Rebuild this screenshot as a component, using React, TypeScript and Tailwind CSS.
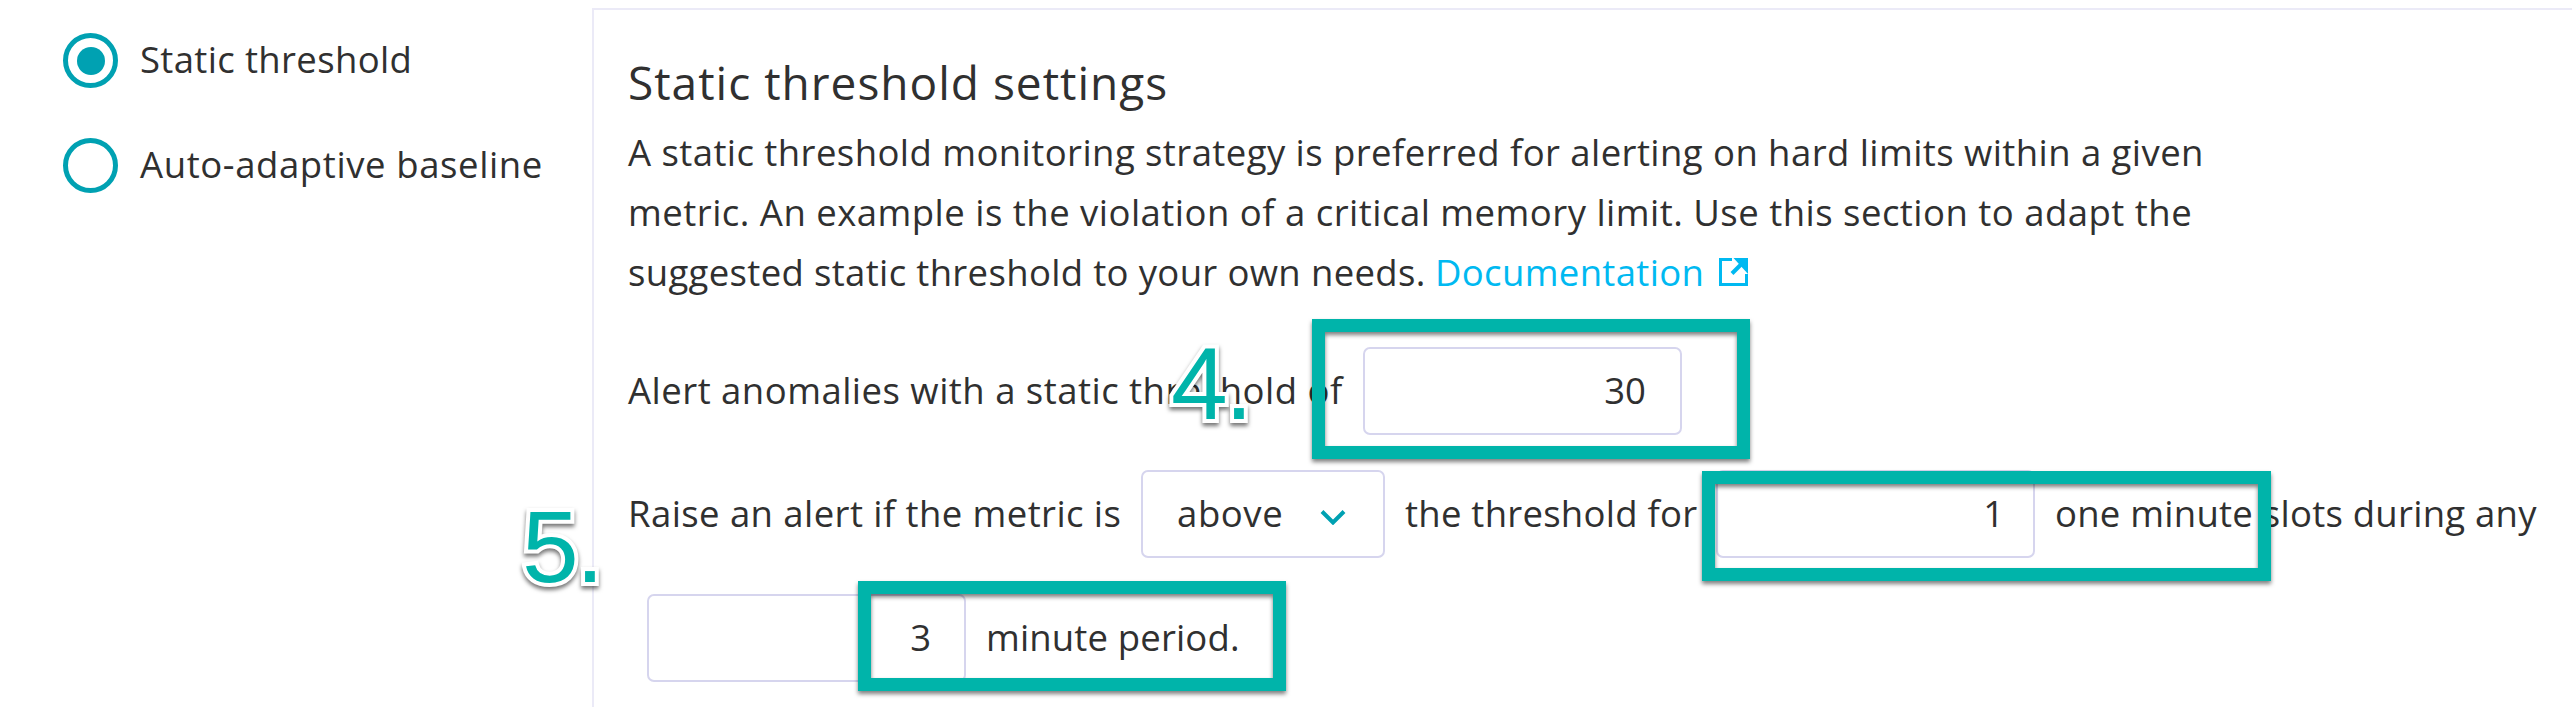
import type { ReactNode } from "react";

function Radio({ label, checked, spacing }: { label: string; checked?: boolean; spacing: string }) {
  return (
    <label className="flex h-[55px] items-center gap-[22px]">
      <span className="flex size-[55px] shrink-0 items-center justify-center rounded-full border-[5px] border-[#00a1b2]">
        {checked && <span className="size-7 rounded-full bg-[#00a1b2]" />}
      </span>
      <span className={`whitespace-nowrap pb-[2px] leading-[49px] ${spacing}`}>{label}</span>
    </label>
  );
}

function Phrase({ children, className }: { children: ReactNode; className: string }) {
  return <span className={`shrink-0 whitespace-nowrap pb-[2px] ${className}`}>{children}</span>;
}

function NumberField({ value, className = "pr-[34px]" }: { value: string; className?: string }) {
  return (
    <span
      className={`flex h-[88px] w-[319px] shrink-0 items-center justify-end rounded-[7px] border-2 border-[#d6d5ee] pb-[2px] ${className}`}
    >
      {value}
    </span>
  );
}

function Highlight({ className }: { className: string }) {
  return (
    <div
      className={`absolute border-[13px] border-[#00b4aa] [filter:drop-shadow(0_3px_2px_rgba(0,0,0,0.5))] ${className}`}
    />
  );
}

function StepNumber({ children, className }: { children: string; className: string }) {
  return (
    <div
      className={`absolute whitespace-nowrap font-['Liberation_Sans',sans-serif] text-[102px] leading-[98px] tracking-[-3px] text-[#00b4aa] [-webkit-text-stroke:8px_white] [paint-order:stroke_fill] [filter:drop-shadow(0_3px_2px_rgba(0,0,0,0.55))] ${className}`}
    >
      {children}
    </div>
  );
}

export default function App() {
  return (
    <div className="relative flex h-[707px] w-[2572px] overflow-hidden bg-white font-['Open_Sans',sans-serif] text-[36.5px] text-[#303030]">
      <div className="flex w-[592px] shrink-0 flex-col gap-[50px] pt-[33px] pl-[63px]">
        <Radio label="Static threshold" checked spacing="tracking-[0.35px]" />
        <Radio label="Auto-adaptive baseline" spacing="tracking-[0.6px]" />
      </div>

      <div className="mt-2 flex w-[1980px] shrink-0 flex-col border-t-2 border-l-2 border-[#ebeaf7] pt-[40px] pl-[34px]">
        <h2 className="text-[46px] leading-[64px] tracking-[1px]">Static threshold settings</h2>
        <div className="mt-2 leading-[60px] whitespace-nowrap">
          <p className="tracking-[0.43px]">
            A static threshold monitoring strategy is preferred for alerting on hard limits within a given
          </p>
          <p className="tracking-[0.48px]">
            metric. An example is the violation of a critical memory limit. Use this section to adapt the
          </p>
          <p className="flex items-center tracking-[0.34px]">
            <span className="w-[807px]">suggested static threshold to your own needs.</span>
            <a className="flex items-center gap-[15px] text-[#00b9f1]">
              Documentation
              <svg width="29" height="28" viewBox="0 0 29 28" fill="none">
                <path d="M13 1.5H1.5V26.5H27.5V16" stroke="currentColor" strokeWidth="3" />
                <path d="M14.5 0H29V16Z" fill="currentColor" />
                <path d="M13 15.5L24 4.5" stroke="currentColor" strokeWidth="4" />
              </svg>
            </a>
          </p>
        </div>

        <div className="mt-[45px] flex items-center">
          <Phrase className="w-[735px] tracking-[0.48px]">Alert anomalies with a static threshold of</Phrase>
          <NumberField value="30" />
        </div>

        <div className="mt-[35px] flex items-center">
          <Phrase className="w-[513px] tracking-[0.42px]">Raise an alert if the metric is</Phrase>
          <span className="flex h-[88px] w-[244px] shrink-0 items-center justify-between rounded-[7px] border-2 border-[#d6d5ee] pr-[37px] pl-[34px]">
            <span className="pb-[2px] tracking-[0.6px]">above</span>
            <svg className="mt-[6px]" width="26" height="16" viewBox="0 0 26 16" fill="none">
              <path d="M2 2.5L13 13.5L24 2.5" stroke="#00a1b2" strokeWidth="4" />
            </svg>
          </span>
          <Phrase className="w-[331px] pl-5 tracking-[0.25px]">the threshold for</Phrase>
          <NumberField value="1" className="pr-[29px]" />
          <Phrase className="pl-5 tracking-[0.25px]">one minute slots during any</Phrase>
        </div>

        <div className="mt-[36px] flex items-center pl-[19px]">
          <NumberField value="3" className="pr-[33px]" />
          <Phrase className="pl-5 tracking-[0.15px]">minute period.</Phrase>
        </div>
      </div>

      <Highlight className="top-[319px] left-[1312px] h-[140px] w-[438px]" />
      <Highlight className="top-[471px] left-[1702px] h-[110px] w-[569px]" />
      <Highlight className="top-[581px] left-[858px] h-[110px] w-[428px]" />
      <StepNumber className="top-[335px] left-[1171px]">4.</StepNumber>
      <StepNumber className="top-[498px] left-[522px]">5.</StepNumber>
    </div>
  );
}
